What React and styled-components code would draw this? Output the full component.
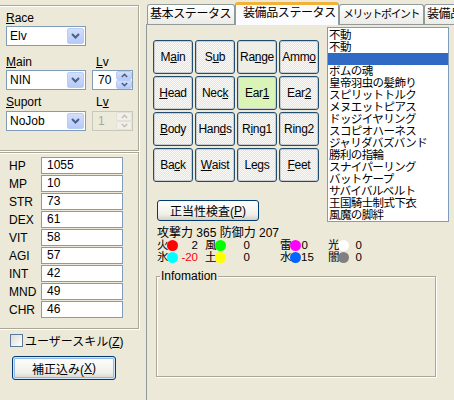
import React from "react";
import styled, { createGlobalStyle } from "styled-components";

const GlobalStyle = createGlobalStyle`
  html, body {
    margin: 0;
    padding: 0;
    background: #ece9d8;
  }
  body {
    font-family: "Liberation Sans", "Noto Sans CJK JP", sans-serif;
    font-size: 12px;
    color: #000;
  }
`;

const slots = [
  { label: ["M", "a", "in"] },
  { label: ["S", "u", "b"] },
  { label: ["Ra", "n", "ge"], variant: "plain" },
  { label: ["Amm", "o", ""] },
  { label: ["", "H", "ead"] },
  { label: ["Nec", "k", ""] },
  { label: ["Ear", "1", ""], variant: "green" },
  { label: ["Ear", "2", ""] },
  { label: ["", "B", "ody"] },
  { label: ["Han", "d", "s"] },
  { label: ["R", "i", "ng1"] },
  { label: ["Rin", "g", "2"] },
  { label: ["Ba", "c", "k"] },
  { label: ["", "W", "aist"] },
  { label: ["Le", "g", "s"] },
  { label: ["", "F", "eet"] },
];

const items = [
  "不動",
  "不動",
  "",
  "ボムの魂",
  "皇帝羽虫の髪飾り",
  "スピリットトルク",
  "メヌエットピアス",
  "ドッジイヤリング",
  "スコピオハーネス",
  "ジャリダバズバンド",
  "勝利の指輪",
  "スナイパーリング",
  "バットケープ",
  "サバイバルベルト",
  "王国騎士制式下衣",
  "風魔の脚絆",
];

const stats = [
  ["HP", "1055"],
  ["MP", "10"],
  ["STR", "73"],
  ["DEX", "61"],
  ["VIT", "58"],
  ["AGI", "57"],
  ["INT", "42"],
  ["MND", "49"],
  ["CHR", "46"],
];

// width of each column and where its number ends
const elemCols = [
  { w: 48, n: 41 },
  { w: 75, n: 45 },
  { w: 48, n: 28 },
  { w: 40, n: 34 },
];

const elemRows = [
  [
    { k: "火", c: "#ff0000", v: "2" },
    { k: "風", c: "#00ff00", v: "0" },
    { k: "雷", c: "#ff00ff", v: "0" },
    { k: "光", c: "#ffffff", v: "0" },
  ],
  [
    { k: "氷", c: "#00ffff", v: "-20", neg: true },
    { k: "土", c: "#ffff00", v: "0" },
    { k: "水", c: "#0066ff", v: "15" },
    { k: "闇", c: "#808080", v: "0" },
  ],
];

const tabs = [
  { text: "基本ステータス", w: 88 },
  { text: "装備品ステータス", w: 104, active: true },
  { text: "メリットポイント", w: 85, tight: true },
  { text: "装備品", w: 80 },
];

const Chevron = ({ up, disabled }) => (
  <svg width="9" height="6" viewBox="0 0 9 6">
    <polyline
      points={up ? "1,5 4.5,1.5 8,5" : "1,1 4.5,4.5 8,1"}
      fill="none"
      stroke={disabled ? "#c4c3bb" : "#4d6185"}
      strokeWidth="2"
    />
  </svg>
);

const Select = ({ value }) => (
  <SelectBox>
    <span>{value}</span>
    <DropButton>
      <Chevron />
    </DropButton>
  </SelectBox>
);

const Spin = ({ value, disabled }) => (
  <SpinBox $disabled={disabled}>
    <span>{value}</span>
    <SpinButtons>
      <SpinButton $disabled={disabled}>
        <Chevron up disabled={disabled} />
      </SpinButton>
      <SpinButton $disabled={disabled}>
        <Chevron disabled={disabled} />
      </SpinButton>
    </SpinButtons>
  </SpinBox>
);

export default function App() {
  return (
    <Window>
      <GlobalStyle />
      <LeftPane>
        <GroupBox $mt={5} $h={146}>
          <LabelRow $mt={6}>
            <FieldLabel>
              <u>R</u>ace
            </FieldLabel>
          </LabelRow>
          <FieldRow $mt={1}>
            <Select value="Elv" />
          </FieldRow>
          <LabelRow $mt={10}>
            <FieldLabel $w={90}>
              <u>M</u>ain
            </FieldLabel>
            <FieldLabel>
              <u>L</u>v
            </FieldLabel>
          </LabelRow>
          <FieldRow $mt={1}>
            <Select value="NIN" />
            <Spin value="70" />
          </FieldRow>
          <LabelRow $mt={6}>
            <FieldLabel $w={90}>
              <u>S</u>uport
            </FieldLabel>
            <FieldLabel>
              L<u>v</u>
            </FieldLabel>
          </LabelRow>
          <FieldRow $mt={2}>
            <Select value="NoJob" />
            <Spin value="1" disabled />
          </FieldRow>
        </GroupBox>

        <GroupBox $mt={1} $h={177}>
          <StatList>
            {stats.map(([k, v]) => (
              <StatRow key={k}>
                <StatLabel>{k}</StatLabel>
                <StatInput>{v}</StatInput>
              </StatRow>
            ))}
          </StatList>
        </GroupBox>

        <CheckRow>
          <CheckBox />
          <span>
            ユーザースキル(<u>Z</u>)
          </span>
        </CheckRow>
        <PushButton $default $w={104} $h={24} $ml={12} $mt={9}>
          補正込み(<u>X</u>)
        </PushButton>
      </LeftPane>

      <RightPane>
        <TabStrip>
          {tabs.map((t) => (
            <Tab key={t.text} $w={t.w} $active={t.active} $tight={t.tight}>
              {t.text}
            </Tab>
          ))}
        </TabStrip>
        <TabPanel>
          <TopRow>
            <EquipColumn>
              <SlotGrid>
                {slots.map((s, i) => (
                  <SlotButton key={i} $variant={s.variant}>
                    {s.label[0]}
                    <u>{s.label[1]}</u>
                    {s.label[2]}
                  </SlotButton>
                ))}
              </SlotGrid>
              <PushButton $w={102} $h={21} $ml={4} $mt={18}>
                正当性検査(<u>P</u>)
              </PushButton>
            </EquipColumn>
            <ListBox>
              {items.map((it, i) => (
                <ListItem key={i} $selected={i === 2}>
                  {it}
                </ListItem>
              ))}
            </ListBox>
          </TopRow>

          <StatsBlock>
            <TextLine>攻撃力 365 防御力 207</TextLine>
            {elemRows.map((row, r) => (
              <ElemRow key={r}>
                {row.map((e, i) => (
                  <ElemCell key={e.k} $w={elemCols[i].w}>
                    <ElemInner $w={elemCols[i].n}>
                      <ElemKanji>{e.k}</ElemKanji>
                      <Dot $c={e.c} />
                      <ElemValue $neg={e.neg}>{e.v}</ElemValue>
                    </ElemInner>
                  </ElemCell>
                ))}
              </ElemRow>
            ))}
          </StatsBlock>

          <InfoSet>
            <legend>Infomation</legend>
          </InfoSet>
        </TabPanel>
      </RightPane>
    </Window>
  );
}

const Window = styled.div`
  display: flex;
  width: 454px;
  height: 400px;
  overflow: hidden;
  background: #ece9d8;
`;

const LeftPane = styled.div`
  flex: none;
  width: 146px;
  display: flex;
  flex-direction: column;
`;

const GroupBox = styled.div`
  box-sizing: border-box;
  margin-left: -2px;
  margin-top: ${(p) => p.$mt}px;
  width: 141px;
  height: ${(p) => p.$h}px;
  padding-left: 7px;
  border: 1px solid #aca899;
  box-shadow: inset 1px 1px 0 #fff, 1px 1px 0 #fff;
  display: flex;
  flex-direction: column;
`;

const LabelRow = styled.div`
  display: flex;
  margin-top: ${(p) => p.$mt}px;
  height: 13px;
  line-height: 13px;
`;

const FieldLabel = styled.span`
  width: ${(p) => (p.$w ? `${p.$w}px` : "auto")};
`;

const FieldRow = styled.div`
  display: flex;
  gap: 6px;
  margin-top: ${(p) => p.$mt}px;
`;

const SelectBox = styled.div`
  box-sizing: border-box;
  width: 80px;
  height: 20px;
  border: 1px solid #7f9db9;
  background: #fff;
  display: flex;
  align-items: center;
  justify-content: space-between;
  padding: 0 1px 0 3px;
`;

const DropButton = styled.div`
  box-sizing: border-box;
  width: 17px;
  height: 16px;
  border: 1px solid #b9cdf6;
  border-radius: 2px;
  background: linear-gradient(#d2dffc, #b6caf7);
  display: flex;
  align-items: center;
  justify-content: center;
`;

const SpinBox = styled.div`
  box-sizing: border-box;
  width: 41px;
  height: 20px;
  border: 1px solid ${(p) => (p.$disabled ? "#c9c7ba" : "#7f9db9")};
  background: ${(p) => (p.$disabled ? "#ebeadb" : "#fff")};
  color: ${(p) => (p.$disabled ? "#aca899" : "#000")};
  display: flex;
  align-items: center;
  justify-content: space-between;
  padding: 0 0 0 5px;
`;

const SpinButtons = styled.div`
  display: flex;
  flex-direction: column;
  height: 18px;
`;

const SpinButton = styled.div`
  box-sizing: border-box;
  width: 16px;
  height: 9px;
  border: 1px solid ${(p) => (p.$disabled ? "#e3e2d8" : "#b9cdf6")};
  border-radius: 2px;
  background: ${(p) =>
    p.$disabled ? "#f1f0e8" : "linear-gradient(#d2dffc, #b6caf7)"};
  display: flex;
  align-items: center;
  justify-content: center;
  svg {
    width: 7px;
    height: 5px;
  }
`;

const StatList = styled.div`
  display: flex;
  flex-direction: column;
  padding-top: 4px;
  padding-left: 3px;
`;

const StatRow = styled.div`
  display: flex;
  align-items: center;
  height: 18px;
`;

const StatLabel = styled.span`
  width: 32px;
`;

const StatInput = styled.div`
  box-sizing: border-box;
  width: 82px;
  height: 17px;
  margin-bottom: 1px;
  border: 1px solid #7f9db9;
  background: #fff;
  padding-left: 5px;
  line-height: 15px;
`;

const CheckRow = styled.div`
  display: flex;
  align-items: center;
  gap: 2px;
  margin: 4px 0 0 10px;
  height: 14px;
`;

const CheckBox = styled.div`
  box-sizing: border-box;
  width: 13px;
  height: 13px;
  border: 1px solid #5b7a9a;
  background: linear-gradient(135deg, #dcdcd7, #fff);
`;

const PushButton = styled.div`
  box-sizing: border-box;
  width: ${(p) => p.$w}px;
  height: ${(p) => p.$h}px;
  margin-left: ${(p) => p.$ml}px;
  margin-top: ${(p) => p.$mt}px;
  border: 1px solid #003c74;
  border-radius: 3px;
  background: linear-gradient(#ffffff, #f0f0ea 70%, #d6d0c5);
  box-shadow: ${(p) =>
    p.$default
      ? "inset 0 0 0 1px #cee7ff, inset 0 0 0 2px #98b8ea"
      : "none"};
  display: flex;
  align-items: center;
  justify-content: center;
`;

const RightPane = styled.div`
  flex: 1;
  display: flex;
  flex-direction: column;
  min-width: 0;
`;

const TabStrip = styled.div`
  display: flex;
  align-items: flex-end;
  height: 24px;
  padding-left: 1px;
`;

const Tab = styled.div`
  box-sizing: border-box;
  flex: none;
  position: relative;
  z-index: ${(p) => (p.$active ? 1 : 0)};
  width: ${(p) => p.$w}px;
  height: ${(p) => (p.$active ? 23 : 20)}px;
  margin-bottom: ${(p) => (p.$active ? -1 : 0)}px;
  border: 1px solid #919b9c;
  border-bottom: none;
  border-top: ${(p) => (p.$active ? "3px solid #f4b13a" : "1px solid #919b9c")};
  border-radius: 3px 3px 0 0;
  background: ${(p) =>
    p.$active ? "#fcfcfe" : "linear-gradient(#ffffff, #ecebe6)"};
  white-space: nowrap;
  overflow: hidden;
  padding-left: ${(p) => (p.$active ? 7 : p.$tight ? 3 : 2)}px;
  line-height: ${(p) => (p.$active ? 17 : 18)}px;
  font-size: ${(p) => (p.$tight ? 11 : 12)}px;
  letter-spacing: ${(p) => (p.$tight ? "-1.5px" : "-0.4px")};
`;

const TabPanel = styled.div`
  box-sizing: border-box;
  flex: 1;
  border: 1px solid #919b9c;
  border-right: none;
  border-bottom: none;
  padding: 2px 0 0 6px;
  display: flex;
  flex-direction: column;
`;

const TopRow = styled.div`
  display: flex;
  align-items: flex-start;
`;

const EquipColumn = styled.div`
  display: flex;
  flex-direction: column;
  padding-top: 13px;
`;

const SlotGrid = styled.div`
  display: grid;
  grid-template-columns: repeat(4, 40px);
  grid-auto-rows: 34px;
  gap: 2px;
`;

const slotBg = {
  plain: "#eeede6",
  green: "#d9f4b6",
};

const SlotButton = styled.div`
  box-sizing: border-box;
  border: 1px solid #234d70;
  border-radius: 3px;
  box-shadow: inset 0 0 0 1px #c7ccd1;
  background: ${(p) =>
    slotBg[p.$variant] ||
    "repeating-conic-gradient(#fbfaf6 0 25%, #e6e4da 0 50%) 0 0 / 2px 2px"};
  display: flex;
  align-items: center;
  justify-content: center;
  letter-spacing: -0.3px;
`;

const ListBox = styled.div`
  box-sizing: border-box;
  width: 122px;
  height: 195px;
  margin-left: 8px;
  border: 1px solid #7f9db9;
  background: #fff;
  padding: 1px 0;
  overflow: hidden;
`;

const ListItem = styled.div`
  height: 12px;
  line-height: 12px;
  font-size: 11.5px;
  padding-left: 1px;
  white-space: nowrap;
  letter-spacing: -0.6px;
  background: ${(p) => (p.$selected ? "#316ac5" : "transparent")};
  color: ${(p) => (p.$selected ? "#fff" : "#000")};
`;

const StatsBlock = styled.div`
  margin-top: 5px;
  padding-left: 4px;
  display: flex;
  flex-direction: column;
`;

const TextLine = styled.div`
  height: 12px;
  line-height: 12px;
  white-space: nowrap;
`;

const ElemRow = styled.div`
  display: flex;
  height: 12px;
  line-height: 12px;
  font-size: 11.5px;
`;

const ElemCell = styled.div`
  width: ${(p) => p.$w}px;
  flex: none;
`;

const ElemInner = styled.div`
  width: ${(p) => p.$w}px;
  display: flex;
  align-items: center;
`;

const ElemKanji = styled.span`
  flex: none;
  width: 11px;
`;

const Dot = styled.span`
  flex: none;
  width: 11px;
  height: 11px;
  border-radius: 50%;
  margin-left: -1px;
  background: ${(p) => p.$c};
`;

const ElemValue = styled.span`
  flex: 1;
  text-align: right;
  white-space: nowrap;
  color: ${(p) => (p.$neg ? "#ff0000" : "#000")};
`;

const InfoSet = styled.fieldset`
  box-sizing: border-box;
  width: 280px;
  height: 107px;
  margin: 7px 0 0 3px;
  padding: 0;
  border: 1px solid #aca899;
  box-shadow: inset 1px 1px 0 #fff, 1px 1px 0 #fff;

  legend {
    margin-left: 3px;
    padding: 0 1px;
    line-height: 13px;
    background: #ece9d8;
  }
`;
